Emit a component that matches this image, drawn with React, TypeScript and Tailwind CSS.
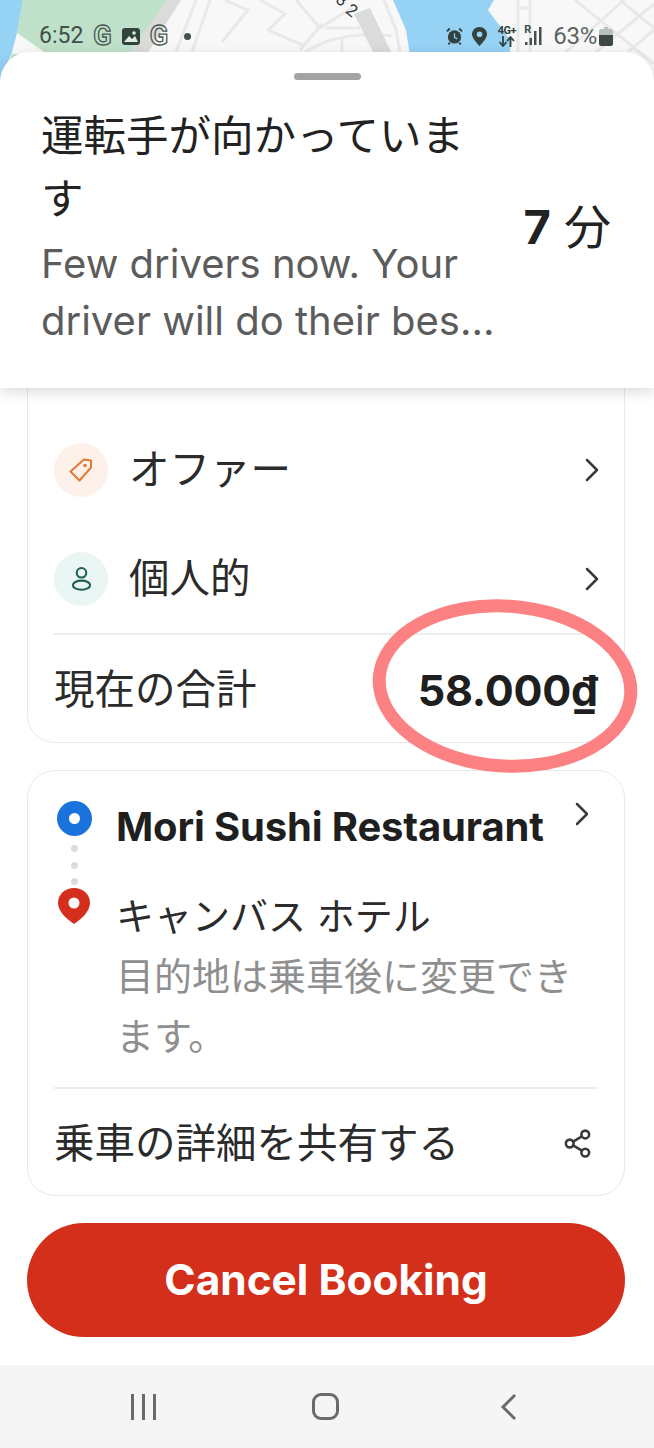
import { ChevronRight, Share2 } from "lucide-react";

const CJK = "font-['Inter','Noto_Sans_CJK_JP',sans-serif]";

function MapBackdrop() {
    return (
        <svg className="absolute left-0 top-0" width="654" height="110" viewBox="0 0 654 110">
            <rect width="654" height="110" fill="#f8f8f8" />
            <path d="M0 0H23L17 33L12 52L0 80Z" fill="#96d2f4" />
            <path d="M23 0H167L128 56H50L17 33Z" fill="#bfe0c9" />
            <path d="M12 54L26 55L0 88Z" fill="#bfe0c9" />
            <path d="M393 0H494L488 10L510 40V56H410L406 30Z" fill="#96d2f4" />
            <g fill="none" stroke="#e8e9e8" strokeWidth="3">
                <path d="M196 0L176 52M210 0L192 52M225 0L248 10L222 42M260 0L285 14L268 30L305 46" />
                <path d="M305 52C330 36 365 32 392 36M342 38V52M296 0L320 28L352 8M326 28H360M322 24L300 50" />
                <path d="M384 0L396 30L400 52" />
                <path d="M518 0V52M530 0V52M518 8H530M575 0L654 64M620 0L654 28M596 52L654 4M566 52L624 0M628 52L654 30" />
            </g>
            <path d="M354 14L370 8L392 54H374Z" fill="#d9dcd9" />
            <path d="M167 0H181L147 54H128Z" fill="#d9dcd9" />
            <text x="347" y="17" fontSize="17" fontFamily="Roboto" fill="#2f3a38" transform="rotate(38 353 11)">2</text>
            <text x="337" y="5" fontSize="17" fontFamily="Roboto" fill="#2f3a38" transform="rotate(38 341 0)">3</text>
        </svg>
    );
}

function GoogleMark() {
    return <span className="font-['Roboto'] font-bold text-[27px] leading-[30px] text-transparent [-webkit-text-stroke:1.3px_#4a5652]">G</span>;
}

function StatusBar() {
    return (
        <div className="relative z-0 h-[52px] shrink-0 flex items-center pl-[39px] pr-[41px] pt-[20px] text-[#3f4f49] font-['Roboto',sans-serif]">
            <span className="text-[23px] leading-[30px]">6:52</span>
            <span className="ml-[10px] flex items-center"><GoogleMark /></span>
            <svg className="ml-[10px]" width="18" height="17" viewBox="0 0 18 17">
                <rect width="18" height="17" rx="3" fill="#32423d" />
                <path d="M2 14L7 8L10 11L13 8L16 14Z" fill="#dfeee4" />
                <circle cx="12" cy="5" r="1.8" fill="#dfeee4" />
            </svg>
            <span className="ml-[10px] flex items-center"><GoogleMark /></span>
            <span className="ml-[16px] size-[7px] rounded-full bg-[#45504c]" />
            <div className="ml-auto flex items-center">
                <svg width="17" height="19" viewBox="0 0 18 19">
                    <circle cx="9" cy="10" r="7" fill="#33413f" />
                    <path d="M9 6V10.5L12 12" fill="none" stroke="#96d2f4" strokeWidth="1.3" />
                    <path d="M1 4L4 1M17 4L14 1" stroke="#33413f" strokeWidth="2" />
                    <path d="M4 16L2.5 18M14 16L15.5 18" stroke="#33413f" strokeWidth="2" />
                </svg>
                <svg className="ml-[9px]" width="15" height="19" viewBox="0 0 15 19">
                    <path d="M7.5 0C3.4 0 0 3.2 0 7.3C0 12 7.5 19 7.5 19S15 12 15 7.3C15 3.2 11.6 0 7.5 0Z" fill="#33413f" />
                    <circle cx="7.5" cy="7.3" r="2.8" fill="#96d2f4" />
                </svg>
                <div className="ml-[9px] flex flex-col items-center w-[21px] text-[#33413f]">
                    <span className="text-[11px] leading-[10px] font-bold tracking-[-0.5px]">4G+</span>
                    <svg width="17" height="11" viewBox="0 0 17 11" fill="none" stroke="#33413f" strokeWidth="1.8">
                        <path d="M5 0V9M1.5 6L5 10L8.5 6" />
                        <path d="M12.5 11V2M9 5L12.5 1L16 5" />
                    </svg>
                </div>
                <div className="ml-[7px] relative w-[18px] h-[20px]">
                    <span className="absolute left-0 -top-[2px] text-[11px] leading-[11px] font-bold">R</span>
                    <svg className="absolute left-0 top-0" width="18" height="20" viewBox="0 0 18 20">
                        <rect x="1" y="16" width="2.5" height="3" fill="#45504c" />
                        <rect x="5.5" y="12" width="2.5" height="7" fill="#45504c" />
                        <rect x="10" y="5" width="2.5" height="14" fill="#45504c" />
                        <rect x="15" y="1" width="2.5" height="18" fill="#45504c" />
                    </svg>
                </div>
                <span className="ml-[11px] mr-[2px] text-[24px] leading-[30px] tracking-[-0.3px] text-[#5a6461]">63%</span>
                <svg width="14" height="19" viewBox="0 0 14 19">
                    <path d="M5 0H9V2H12C13 2 14 3 14 4V8H0V4C0 3 1 2 2 2H5Z" fill="#b9bdbb" />
                    <path d="M0 8H14V17C14 18 13 19 12 19H2C1 19 0 18 0 17Z" fill="#3d4844" />
                </svg>
            </div>
        </div>
    );
}

function TripSheet() {
    return (
        <div className="relative z-10 h-[336px] shrink-0 bg-white rounded-t-[30px] shadow-[0_4px_14px_rgba(0,0,0,0.14)]">
            <div className="mx-auto pt-[21px] w-[67px]">
                <div className="h-[7px] rounded-full bg-[#a3a3a3]" />
            </div>
            <div className={`mt-[24px] flex items-center pl-[41px] pr-[43px] ${CJK}`}>
                <div className="w-[460px]">
                    <div className="w-[440px] text-[42.5px] leading-[63px] text-[#222]">運転手が向かっています</div>
                    <div className="mt-[5px] text-[40px] leading-[57px] text-[#5c5c5c]">Few drivers now. Your driver will do their bes...</div>
                </div>
                <div className="ml-auto text-[47px] leading-[60px] text-[#222] whitespace-nowrap">
                    <span className="font-bold">7</span> 分
                </div>
            </div>
        </div>
    );
}

function TagIcon() {
    return (
        <svg width="24" height="24" viewBox="0 0 24 24" fill="none" stroke="#e07a34" strokeWidth="2" strokeLinejoin="round">
            <path d="M15 1.5L22 2.5V9.5L10.5 22.5L1.5 13.5Z" />
            <circle cx="16" cy="7.5" r="1.8" fill="#e07a34" stroke="none" />
        </svg>
    );
}

function PersonIcon() {
    return (
        <svg width="21" height="26" viewBox="0 0 22 26" fill="none" stroke="#1f5f4e" strokeWidth="2.2">
            <circle cx="11" cy="6.5" r="5" />
            <ellipse cx="11" cy="19.5" rx="9" ry="4.8" />
        </svg>
    );
}

function OptionRow({ icon, tint, label }: { icon: React.ReactNode; tint: string; label: string }) {
    return (
        <div className="h-[109px] flex items-center">
            <div className={`size-[54px] rounded-full flex items-center justify-center ${tint}`}>{icon}</div>
            <span className="ml-[21px] text-[40.5px] leading-[56px] text-[#2b2b2b]">{label}</span>
            <ChevronRight className="ml-auto -mr-[14px] text-[#3a3a3a]" size={40} strokeWidth={1.5} />
        </div>
    );
}

function PriceCard() {
    return (
        <div className={`-mt-[20px] ml-[27px] w-[598px] h-[375px] border-[1.5px] border-[#e8e8e8] rounded-b-[28px] px-[26px] pt-[46px] ${CJK}`}>
            <OptionRow
                tint="bg-[#fdf1e9]"
                label="オファー"
                icon={<TagIcon />}
            />
            <OptionRow tint="bg-[#e9f6f4]" label="個人的" icon={<PersonIcon />} />
            <div className="h-[2px] bg-[#ececec]" />
            <div className="h-[112px] pb-[3px] flex items-center justify-between">
                <span className="text-[40.5px] leading-[56px] text-[#2b2b2b]">現在の合計</span>
                <span className="text-[43px] leading-[56px] font-bold text-[#1f1f1f] tracking-[-0.2px]">58.000₫</span>
            </div>
        </div>
    );
}

function RouteCard() {
    return (
        <div className={`mt-[27px] ml-[27px] w-[598px] h-[426px] border-[1.5px] border-[#e8e8e8] rounded-[28px] px-[26px] ${CJK}`}>
            <div className="h-[316px] flex pt-[28px]">
                <div className="w-[40px] shrink-0 pt-[2px] flex flex-col items-center">
                    <div className="size-[35px] rounded-full bg-[#1a73dc] flex items-center justify-center">
                        <div className="size-[11px] rounded-full bg-white" />
                    </div>
                    <div className="mt-[9px] flex flex-col gap-[9.5px]">
                        <div className="size-[7px] rounded-full bg-[#dcdcdc]" />
                        <div className="size-[7px] rounded-full bg-[#dcdcdc]" />
                        <div className="size-[7px] rounded-full bg-[#dcdcdc]" />
                    </div>
                    <svg className="mt-[3px]" width="32" height="36" viewBox="0 0 32 36">
                        <path d="M16 0C7 0 0 6.5 0 15C0 24 10 32 16 36C22 32 32 24 32 15C32 6.5 25 0 16 0Z" fill="#d52e1c" />
                        <circle cx="16" cy="15" r="5.5" fill="#fff" />
                    </svg>
                </div>
                <div className="ml-[22px] flex-1 min-w-0">
                    <div className="flex items-start">
                        <span className="text-[40px] leading-[56px] font-bold text-[#1f1f1f] tracking-[-0.15px] whitespace-nowrap">Mori Sushi Restaurant</span>
                        <ChevronRight className="ml-auto -mt-[5px] -mr-[4px] text-[#3a3a3a] shrink-0" size={40} strokeWidth={1.5} />
                    </div>
                    <div className="mt-[31px] text-[38px] leading-[60px] text-[#2b2b2b]">キャンバス ホテル</div>
                    <div className="text-[38px] leading-[60px] text-[#8f8f8f]">目的地は乗車後に変更できます。</div>
                </div>
            </div>
            <div className="h-[2px] bg-[#ececec]" />
            <div className="h-[106px] pt-[3px] flex items-center justify-between">
                <span className="text-[40.5px] leading-[56px] text-[#2b2b2b]">乗車の詳細を共有する</span>
                <Share2 className="mr-[5px] text-[#3a3a3a]" size={31} strokeWidth={2} />
            </div>
        </div>
    );
}

function NavBar() {
    return (
        <div className="mt-auto h-[83px] bg-[#f5f5f5] flex items-center relative">
            <div className="absolute left-[131px] top-[29px] flex gap-[8px]">
                <div className="w-[3px] h-[26px] bg-[#6a6a6a]" />
                <div className="w-[3px] h-[26px] bg-[#6a6a6a]" />
                <div className="w-[3px] h-[26px] bg-[#6a6a6a]" />
            </div>
            <div className="absolute left-[312px] top-[28px] w-[27px] h-[27px] rounded-[9px] border-[3px] border-[#6a6a6a]" />
            <svg className="absolute left-[499px] top-[28px]" width="20" height="28" viewBox="0 0 20 28" fill="none" stroke="#6a6a6a" strokeWidth="3">
                <path d="M16 2L4 14L16 26" />
            </svg>
        </div>
    );
}

export default function App() {
    return (
        <div className="relative w-[654px] h-[1448px] bg-white overflow-hidden flex flex-col">
            <MapBackdrop />
            <StatusBar />
            <TripSheet />
            <PriceCard />
            <RouteCard />
            <button className={`mt-[27px] ml-[27px] w-[598px] h-[114px] shrink-0 rounded-full bg-[#d32f1b] text-white text-[42.4px] font-bold ${CJK}`}>
                Cancel Booking
            </button>
            <NavBar />
            <svg className="absolute left-[368px] top-[594px]" width="276" height="184" viewBox="0 0 276 184" fill="none">
                <ellipse cx="137" cy="92" rx="126" ry="80" stroke="#fb7a7c" strokeWidth="13" opacity="0.95" transform="rotate(4 137 92)" />
            </svg>
        </div>
    );
}
